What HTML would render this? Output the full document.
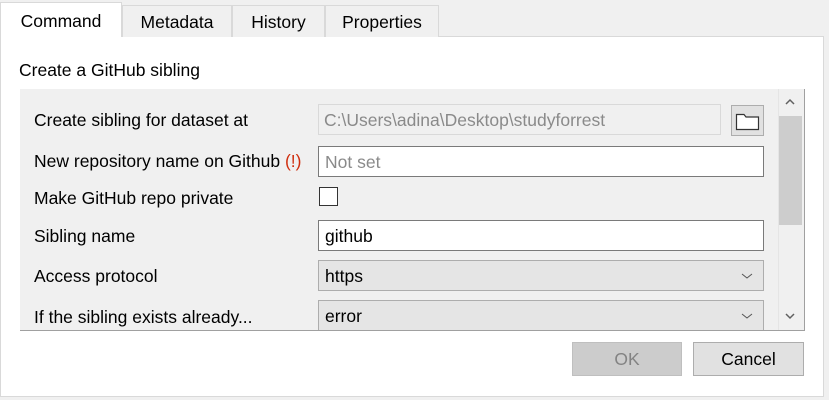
<!DOCTYPE html>
<html><head><style>
*{box-sizing:border-box}
body{margin:0;width:829px;height:400px;background:#f0f0f0;font-family:"Liberation Sans",sans-serif;font-size:17.5px;color:#000;position:relative;overflow:hidden}
.a{position:absolute}
.tab{position:absolute;top:5px;height:32px;background:#f0f0f0;border:1px solid #d9d9d9;border-bottom:none;text-align:center;line-height:32px}
.lbl{position:absolute;left:34px}
.inp{position:absolute;left:318px;width:446px;height:31px;background:#fff;border:1px solid #7a7a7a;padding-left:6px;line-height:30px}
.cb{position:absolute;left:318px;width:446px;height:31px;background:#e5e5e5;border:1px solid #adadad;padding-left:6px;line-height:30px}
.chev{position:absolute;right:10px;top:9px}
</style></head><body>
<div class="a" style="left:0;top:36px;width:824px;height:361px;background:#fff;border:1px solid #d9d9d9"></div>
<div class="tab" style="left:0;top:2px;width:122px;height:35px;background:#fff;line-height:36px">Command</div>
<div class="tab" style="left:122px;width:110px">Metadata</div>
<div class="tab" style="left:232px;width:93px">History</div>
<div class="tab" style="left:325px;width:114px">Properties</div>
<div class="a" style="left:19px;top:60px">Create a GitHub sibling</div>
<div class="a" style="left:20px;top:89px;width:785px;height:242px;background:#f0f0f0;border-right:1px solid #a0a0a0;border-bottom:1px solid #a0a0a0;overflow:hidden">
</div>
<div class="a" style="left:778px;top:89px;width:25px;height:241px;background:#f0f0f0;border-left:1px solid #e5e5e5"></div>
<div class="a" style="left:779px;top:116px;width:23px;height:109px;background:#cdcdcd"></div>
<svg class="a" style="left:784px;top:97px" width="12" height="10"><path d="M2 7 L6 3 L10 7" stroke="#606060" stroke-width="1.5" fill="none"/></svg>
<svg class="a" style="left:784px;top:311px" width="12" height="10"><path d="M2 3 L6 7 L10 3" stroke="#606060" stroke-width="1.5" fill="none"/></svg>

<div class="lbl" style="top:110px">Create sibling for dataset at</div>
<div class="a" style="left:318px;top:104px;width:403px;height:31px;background:#f0f0f0;border:1px solid #d9d9d9;padding-left:5px;line-height:31px;color:#8a8a8a">C:\Users\adina\Desktop\studyforrest</div>
<div class="a" style="left:731px;top:105px;width:33px;height:31px;background:#e1e1e1;border:1px solid #adadad"></div>
<svg class="a" style="left:735px;top:110px" width="26" height="22"><path d="M1.5 4.5 H9 L11 7 H23.5 V19.5 H1.5 Z" stroke="#333" stroke-width="1.2" fill="#fff"/></svg>

<div class="lbl" style="top:151px">New repository name on Github <span style="color:#d03010">(!)</span></div>
<div class="inp" style="top:146px;color:#8a8a8a">Not set</div>

<div class="lbl" style="top:188px">Make GitHub repo private</div>
<div class="a" style="left:319px;top:187px;width:19px;height:19px;background:#fff;border:1px solid #333"></div>

<div class="lbl" style="top:226px">Sibling name</div>
<div class="inp" style="top:220px">github</div>

<div class="lbl" style="top:266px">Access protocol</div>
<div class="cb" style="top:260px">https<svg class="chev" width="12" height="12"><path d="M1 4 L6 8 L11 4" stroke="#555" stroke-width="1" fill="none"/></svg></div>

<div class="lbl" style="top:307px">If the sibling exists already...</div>
<div class="a" style="left:318px;top:300px;width:446px;height:30px;overflow:hidden"><div class="cb" style="left:0;top:0">error<svg class="chev" width="12" height="12"><path d="M1 4 L6 8 L11 4" stroke="#555" stroke-width="1" fill="none"/></svg></div></div>

<div class="a" style="left:572px;top:342px;width:110px;height:34px;background:#cccccc;border:1px solid #bfbfbf;text-align:center;line-height:33px;color:#838383">OK</div>
<div class="a" style="left:693px;top:342px;width:111px;height:34px;background:#e1e1e1;border:1px solid #adadad;text-align:center;line-height:33px">Cancel</div>
</body></html>
